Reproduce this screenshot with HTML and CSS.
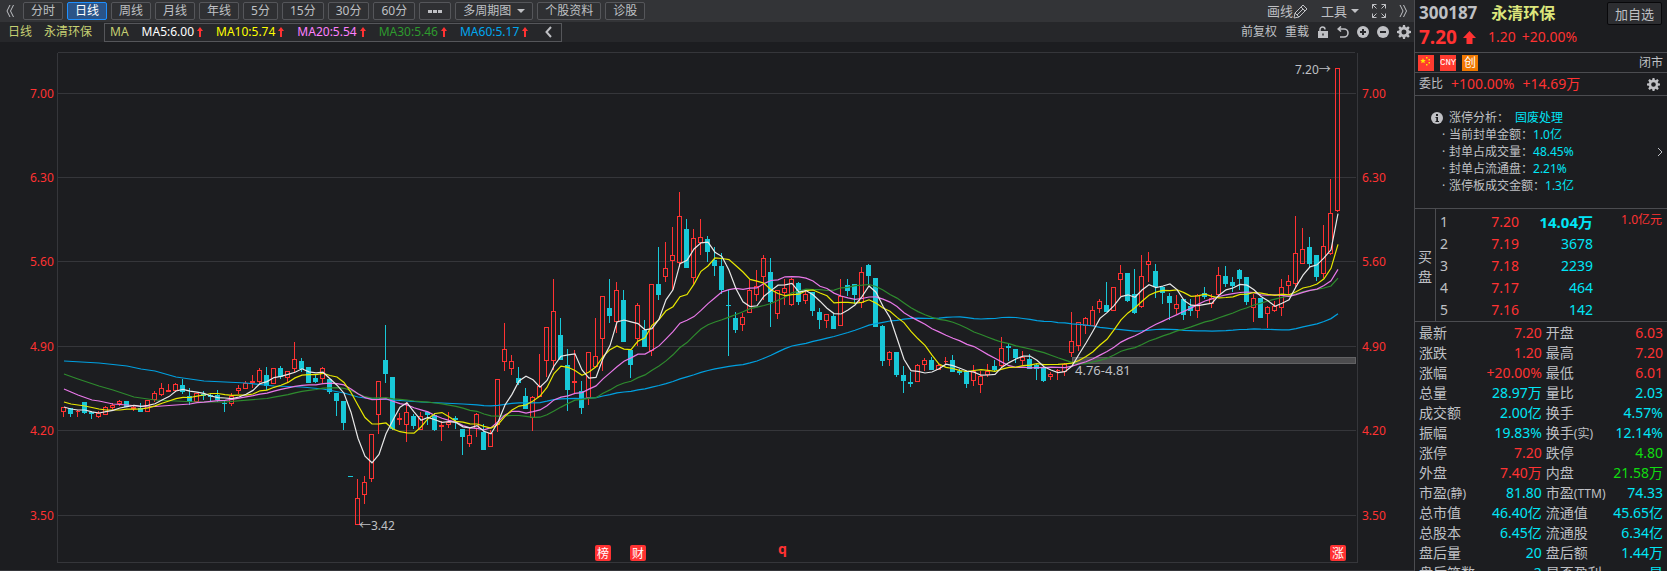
FILE: index.html
```
<!DOCTYPE html>
<html lang="zh-CN">
<head>
	<meta charset="utf-8">
	<meta name="viewport" content="width=device-width, initial-scale=1">
	<title>永清环保 300187</title>
	<link rel="stylesheet" href="styles.css">
</head>
<body>

	<!-- shared icons -->
	<svg class="sprite" aria-hidden="true">
		<symbol id="gear" viewBox="0 0 14 14">
			<path fill-rule="evenodd" d="M6 0h2l.4 2 1 .4 1.700-1.200 1.600 1.600-1.200 1.700.5 1.100 2 .4v2l-2 .4-.5 1.100 1.200 1.700-1.600 1.600-1.700-1.200-1 .4L8 14H6l-.4-2-1-.4-1.700 1.200-1.600-1.600 1.200-1.700L2 8.400 0 8V6l2-.4.5-1.100-1.200-1.700 1.600-1.600 1.700 1.200 1-.4zM7 4.500a2.500 2.500 0 1 0 0 5 2.500 2.500 0 0 0 0-5z" fill="currentColor"/>
		</symbol>
		<symbol id="up" viewBox="0 0 6 10">
			<path d="M3 0l3 4H4v6H2V4H0z" fill="currentColor"/>
		</symbol>
	</svg>

	<main class="main">
		<nav class="toolbar">
			<button class="plain" aria-label="收起">
				<svg width="8" height="14" viewBox="0 0 8 14" fill="none" stroke="currentColor"><path d="M4 1L1 7l3 6M7.500 1l-3 6 3 6"/></svg>
			</button>
			<div class="tabs">
				<button>分时</button>
				<button class="active">日线</button>
				<button>周线</button>
				<button>月线</button>
				<button>年线</button>
				<button>5分</button>
				<button>15分</button>
				<button>30分</button>
				<button>60分</button>
				<button class="more" aria-label="更多周期"><i></i><i></i><i></i></button>
				<button>多周期图<span class="caret"></span></button>
				<button>个股资料</button>
				<button>诊股</button>
			</div>
			<div class="tools">
				<button class="plain">画线
					<svg width="15" height="15" viewBox="0 0 15 15" fill="none" stroke="currentColor"><path d="M1 14l1-5 8-8 4 4-8 8zM2 9l4 4M8 3l4 4M4 11l6-6"/></svg>
				</button>
				<button class="plain">工具<span class="caret"></span></button>
				<button class="plain" aria-label="全屏">
					<svg width="14" height="14" viewBox="0 0 14 14" fill="none" stroke="currentColor"><path d="M.5 4.500v-4h4M.5.5l4 4M9.500.5h4v4M13.500.5l-4 4M.5 9.500v4h4M.5 13.500l4-4M13.500 9.500v4h-4M13.500 13.500l-4-4"/></svg>
				</button>
				<button class="plain" aria-label="展开">
					<svg width="8" height="14" viewBox="0 0 8 14" fill="none" stroke="currentColor"><path d="M1 1l3 6-3 6M4.500 1l3 6-3 6"/></svg>
				</button>
			</div>
		</nav>

		<div class="indicators">
			<span class="name">日线</span>
			<span class="name">永清环保</span>
			<div class="ma-box">
				<span class="ma-title">MA</span>
				<span class="ma5">MA5:6.00<svg class="up"><use href="#up"/></svg></span>
				<span class="ma10">MA10:5.74<svg class="up"><use href="#up"/></svg></span>
				<span class="ma20">MA20:5.54<svg class="up"><use href="#up"/></svg></span>
				<span class="ma30">MA30:5.46<svg class="up"><use href="#up"/></svg></span>
				<span class="ma60">MA60:5.17<svg class="up"><use href="#up"/></svg></span>
				<button class="plain fold" aria-label="折叠">
					<svg width="7" height="12" viewBox="0 0 7 12" fill="none" stroke="currentColor" stroke-width="2"><path d="M6 1L1.500 6 6 11"/></svg>
				</button>
			</div>
			<div class="actions">
				<button class="plain">前复权</button>
				<button class="plain">重载</button>
				<button class="plain" aria-label="锁定">
					<svg width="12" height="12" viewBox="0 0 12 12"><path d="M3 6V3.500a2.500 2.500 0 0 1 5 0" fill="none" stroke="currentColor" stroke-width="1.500"/><path d="M1 5h10v7H1zM5.300 7.500v2h1.400v-2z" fill="currentColor" fill-rule="evenodd"/></svg>
				</button>
				<button class="plain" aria-label="撤销">
					<svg width="12" height="12" viewBox="0 0 12 12" fill="none" stroke="currentColor" stroke-width="1.600"><path d="M4 .5L1.200 3 4 5.500M1.500 3H7a4 4 0 0 1 0 8H3"/></svg>
				</button>
				<button class="plain" aria-label="放大">
					<svg width="12" height="12" viewBox="0 0 12 12"><circle cx="6" cy="6" r="6" fill="currentColor"/><path d="M6 3v6M3 6h6" stroke="#26272a" stroke-width="2"/></svg>
				</button>
				<button class="plain" aria-label="缩小">
					<svg width="12" height="12" viewBox="0 0 12 12"><circle cx="6" cy="6" r="6" fill="currentColor"/><path d="M3 6h6" stroke="#26272a" stroke-width="2"/></svg>
				</button>
				<button class="plain" aria-label="设置"><svg width="14" height="14"><use href="#gear"/></svg></button>
			</div>
		</div>

		<svg class="chart" id="chart" viewBox="0 42 1414 529"></svg>
	</main>

	<aside class="side">
		<header class="quote">
			<div class="quote-text">
				<div class="title"><b class="code">300187</b><b class="stock">永清环保</b></div>
				<div class="price red">
					<b>7.20</b>
					<svg width="13" height="13" viewBox="0 0 13 13"><path d="M6.500 0L13 7H9.500v6h-6V7H0z" fill="currentColor"/></svg>
					<span>1.20</span><span>+20.00%</span>
				</div>
			</div>
			<button class="add">加自选</button>
		</header>

		<div class="tags">
			<svg class="tag" viewBox="0 0 16 16"><path d="M0 0h16v16H0z" fill="#ff3b30"/><path d="M5 3l.8 1.900 2 .1-1.500 1.300.5 2L5 7.200 3.200 8.300l.5-2L2.200 5l2-.1zM8 2h1.500v1.500H8zM10.500 4H12v1.500h-1.500zM10.500 7H12v1.500h-1.500zM8 9h1.500v1.500H8z" fill="#ffe600"/></svg>
			<span class="tag cny">CNY</span>
			<span class="tag chuang">创</span>
			<span class="state">闭市</span>
		</div>

		<div class="ratio">
			<span>委比</span><span class="red num">+100.00%</span><span class="red num">+14.69万</span>
			<button class="plain" aria-label="设置"><svg width="13" height="13"><use href="#gear"/></svg></button>
		</div>

		<section class="analysis">
			<div class="line head">
				<svg width="12" height="12" viewBox="0 0 12 12"><circle cx="6" cy="6" r="6" fill="currentColor"/><path d="M5 2h2v2H5zM4.500 5H7v4h1v1H4.500V9h.8V6h-.8z" fill="#1c1d20"/></svg>
				<span>涨停分析：</span><a href="#">固废处理</a>
			</div>
			<div class="line"><span>当前封单金额：</span><em>1.0亿</em></div>
			<div class="line"><span>封单占成交量：</span><em>48.45%</em></div>
			<div class="line"><span>封单占流通盘：</span><em>2.21%</em></div>
			<div class="line"><span>涨停板成交金额：</span><em>1.3亿</em></div>
			<button class="plain next" aria-label="下一页">
				<svg width="6" height="8" viewBox="0 0 6 8" fill="none" stroke="currentColor"><path d="M1 0l4 4-4 4"/></svg>
			</button>
		</section>

		<section class="bids">
			<div class="bids-title">买<br>盘</div>
			<table>
				<tr><td>1</td><td class="red">7.20</td><td class="cyan"><b>14.04万</b></td><td class="red amount">1.0亿元</td></tr>
				<tr><td>2</td><td class="red">7.19</td><td class="cyan">3678</td><td></td></tr>
				<tr><td>3</td><td class="red">7.18</td><td class="cyan">2239</td><td></td></tr>
				<tr><td>4</td><td class="red">7.17</td><td class="cyan">464</td><td></td></tr>
				<tr><td>5</td><td class="red">7.16</td><td class="cyan">142</td><td></td></tr>
			</table>
		</section>

		<table class="stats">
			<tr><th>最新</th><td class="red">7.20</td><th>开盘</th><td class="red">6.03</td></tr>
			<tr><th>涨跌</th><td class="red">1.20</td><th>最高</th><td class="red">7.20</td></tr>
			<tr><th>涨幅</th><td class="red">+20.00%</td><th>最低</th><td class="red">6.01</td></tr>
			<tr><th>总量</th><td>28.97万</td><th>量比</th><td>2.03</td></tr>
			<tr><th>成交额</th><td>2.00亿</td><th>换手</th><td>4.57%</td></tr>
			<tr><th>振幅</th><td>19.83%</td><th>换手<small>(实)</small></th><td>12.14%</td></tr>
			<tr><th>涨停</th><td class="red">7.20</td><th>跌停</th><td class="green">4.80</td></tr>
			<tr><th>外盘</th><td class="red">7.40万</td><th>内盘</th><td class="green">21.58万</td></tr>
			<tr><th>市盈<small>(静)</small></th><td>81.80</td><th>市盈<small>(TTM)</small></th><td>74.33</td></tr>
			<tr><th>总市值</th><td>46.40亿</td><th>流通值</th><td>45.65亿</td></tr>
			<tr><th>总股本</th><td>6.45亿</td><th>流通股</th><td>6.34亿</td></tr>
			<tr><th>盘后量</th><td>20</td><th>盘后额</th><td>1.44万</td></tr>
			<tr><th>盘后笔数</th><td>2</td><th>是否盈利</th><td>是</td></tr>
		</table>
	</aside>

	<script src="chart.js"></script>
</body>
</html>
```
FILE: styles.css
```
*{
    margin: 0;
    padding: 0;
    box-sizing: border-box;
}
body{
    display: flex;
    height: 100vh;
    overflow: hidden;
    background: #1c1d20;
    color: #bfc0c4;
    font: 12px/16px "Noto Sans", "Noto Sans CJK SC", sans-serif;
}
button{
    font: inherit;
    color: inherit;
    cursor: pointer;
}
svg{
    display: block;
    flex: none;
}
.sprite{
    position: absolute;
    width: 0;
    height: 0;
}
.plain{
    display: flex;
    align-items: center;
    background: none;
    border: none;
}
.red{ color: #ff3232; }
.cyan{ color: #00e6f6; }
.green{ color: #10dc10; }

/* left part */
.main{
    flex: 1;
    min-width: 0;
}
.toolbar{
    display: flex;
    align-items: center;
    height: 22px;
    padding: 0 7px 0 6px;
    background: #333437;
}
.tabs{
    display: flex;
    gap: 4px;
    margin-left: 9px;
}
.tabs button{
    display: flex;
    align-items: center;
    height: 18px;
    padding: 0 7px;
    white-space: nowrap;
    background: #2f3033;
    border: 1px solid #55565a;
    border-radius: 2px;
}
.tabs .active{
    color: #fff;
    background: #2a5488;
    border-color: #1e90ff;
}
.tabs .more{
    gap: 1px;
    padding: 0 8px;
}
.more i{
    width: 4px;
    height: 3px;
    background: #bfc0c4;
}
.caret{
    margin-left: 6px;
    border: 4px solid transparent;
    border-top-color: #bfc0c4;
    border-bottom: none;
}
.tools{
    display: flex;
    align-items: center;
    gap: 13px;
    margin-left: auto;
    font-size: 13px;
}
.tools .caret{
    margin-left: 4px;
}

.indicators{
    display: flex;
    align-items: center;
    height: 20px;
    padding: 0 3px 0 8px;
    background: #26272a;
}
.name{
    margin-right: 12px;
    color: #c5cf72;
}
.ma-box{
    display: flex;
    align-items: center;
    gap: 13px;
    height: 19px;
    padding: 0 9px 0 5px;
    border: 1px solid #55565a;
}
.ma-box span{
    display: flex;
    align-items: center;
}
.ma-title{ color: #c5cf72; }
.ma5{ color: #fff; }
.ma10{ color: #ffff00; }
.ma20{ color: #ff80ff; }
.ma30{ color: #2e9a2e; }
.ma60{ color: #00a8f0; }
.up{
    width: 6px;
    height: 10px;
    margin-left: 3px;
    color: #ff3232;
}
.fold{
    margin-left: 4px;
}
.actions{
    display: flex;
    align-items: center;
    gap: 8px;
    margin-left: auto;
}

.chart{
    width: 100%;
    height: auto;
}
.chart text{
    fill: #bfc0c4;
    font-size: 12px;
}
.chart .note{
    font-size: 13px;
}
.chart .tick{
    fill: #ff3232;
}
.chart .badge{
    fill: #fff;
    text-anchor: middle;
}
.chart .mark{
    fill: #ff3232;
    font-size: 14px;
    font-weight: bold;
}

/* right part */
.side{
    width: 253px;
    flex: none;
    border-left: 1px solid #4b4c50;
}
.quote{
    display: flex;
    justify-content: space-between;
    align-items: flex-start;
    height: 53px;
    padding: 2px 5px 0 4px;
    border-bottom: 1px solid #4b4c50;
}
.title{
    display: flex;
    gap: 14px;
    line-height: 22px;
}
.code{
    font-size: 17px;
}
.stock{
    font-size: 16px;
    color: #dce67c;
}
.price{
    display: flex;
    align-items: center;
    gap: 6px;
    font-size: 14px;
    line-height: 26px;
}
.price b{
    font-size: 19px;
}
.price svg{
    margin-right: 6px;
}
.add{
    height: 23px;
    padding: 0 7px;
    font-size: 13px;
    background: #2d2e31;
    border: 1px solid #08080a;
    border-radius: 2px;
}
.tags{
    display: flex;
    align-items: center;
    gap: 6px;
    height: 20px;
    padding: 0 4px 0 3px;
    border-bottom: 1px solid #4b4c50;
}
.tag{
    width: 16px;
    height: 16px;
    color: #fff;
    text-align: center;
}
.cny{
    font: 9px/16px "Liberation Mono", monospace;
    background: #ff3b30;
}
.chuang{
    background: #f07800;
}
.state{
    margin-left: auto;
}
.ratio{
    display: flex;
    align-items: center;
    gap: 8px;
    height: 23px;
    padding: 0 7px 0 4px;
    border-bottom: 1px solid #4b4c50;
}
.num{
    font-size: 14px;
}
.ratio button{
    margin-left: auto;
}

.analysis{
    position: relative;
    height: 113px;
    padding: 13px 16px;
    border-bottom: 1px solid #4b4c50;
}
.line{
    display: flex;
    align-items: center;
    height: 17px;
    padding-left: 18px;
}
.line::before{
    content: "·";
    width: 7px;
    margin-left: -7px;
}
.line em{
    font-style: normal;
    color: #00e6f6;
}
.line a{
    color: #00e6f6;
    text-decoration: none;
}
.head{
    gap: 6px;
    padding-left: 0;
}
.head::before{
    display: none;
}
.next{
    position: absolute;
    right: 4px;
    top: 52px;
}

.bids{
    display: flex;
    border-bottom: 1px solid #4b4c50;
    font-size: 14px;
}
.bids-title{
    display: flex;
    align-items: center;
    width: 21px;
    padding: 4px 0 0 3px;
    line-height: 20px;
    border-right: 1px solid #4b4c50;
}
.bids table{
    flex: 1;
    margin: 1px 5px 1px 0;
    border-collapse: collapse;
}
.bids td{
    height: 22px;
    padding: 2px 0 0;
    text-align: right;
}
.bids td:first-child{
    width: 18px;
    padding-left: 4px;
    text-align: left;
}
.bids td:nth-child(2){
    width: 65px;
}
.bids td:nth-child(3){
    width: 74px;
}
.bids b{
    font-size: 15px;
}
.bids .amount{
    padding: 0 0 2px;
    font-size: 12px;
}

.stats{
    width: 100%;
    margin-top: 1px;
    border-collapse: collapse;
    font-size: 14px;
}
.stats th,
.stats td{
    height: 20px;
    white-space: nowrap;
}
.stats th{
    width: 70px;
    padding-left: 4px;
    font-weight: normal;
    text-align: left;
}
.stats td{
    color: #00e6f6;
    text-align: right;
}
.stats td:last-child{
    padding-right: 4px;
}
.stats .red{ color: #ff3232; }
.stats .green{ color: #10dc10; }
.stats small{
    font-size: 12px;
}
```
FILE: chart.js
```
// one candle per entry: direction (r = up, g = down), then the y of high, body top, body bottom, low
const candles = `
r 407 407 412 417,g 408 408 414 417,r 410 411 412 417,g 402 402 413 414,g 411 412 414 419,
r 411 413 417 418,r 406 407 415 415,r 403 405 408 410,r 400 401 404 406,g 401 401 407 407,
r 406 407 409 411,g 403 408 412 412,r 400 400 412 412,r 391 393 400 402,r 383 388 395 396,
r 384 390 392 392,r 383 384 391 391,g 379 385 392 394,g 388 396 402 405,r 393 393 402 402,
g 391 394 396 400,g 393 395 397 402,g 390 395 400 402,g 401 403 404 412,r 393 396 404 406,
r 385 388 391 394,r 381 383 389 389,r 375 381 383 388,r 368 370 382 383,g 367 375 386 390,
r 368 368 384 384,g 366 368 377 379,r 371 371 378 383,r 342 359 369 372,g 358 361 369 372,
g 367 367 383 383,g 375 378 382 383,r 367 368 379 383,g 379 379 392 394,g 393 393 401 416,
g 401 401 423 430,g 476 476 477 477,r 479 498 525 525,r 476 482 495 504,r 434 434 479 482,
r 381 381 415 434,g 325 360 374 383,g 377 377 429 430,r 413 418 420 425,r 402 412 425 442,
g 414 416 426 429,r 412 416 430 430,g 411 412 415 425,g 413 415 430 431,r 421 425 427 441,
r 412 422 425 428,g 416 418 420 429,g 429 429 437 455,r 427 435 444 447,r 413 414 429 437,
g 424 432 450 450,r 430 433 447 447,r 379 379 425 432,r 323 349 362 371,r 355 361 369 375,
g 367 378 383 385,g 388 396 409 409,r 396 397 418 431,r 354 386 397 397,r 327 327 361 377,
r 279 311 361 370,g 318 335 360 360,g 349 365 390 411,r 350 381 383 393,g 381 391 408 414,
r 352 352 398 405,r 318 356 367 368,r 296 296 339 371,g 279 308 316 323,r 282 290 322 333,
g 290 300 342 342,g 350 350 365 378,r 303 305 339 346,g 320 330 347 347,r 284 284 351 356,
g 247 284 295 300,r 242 268 277 282,r 227 255 261 290,r 192 216 263 267,g 219 229 268 268,
r 229 238 278 284,r 219 237 243 255,g 236 239 252 262,g 247 260 266 276,g 253 266 290 294,
g 290 305 306 356,g 312 318 330 333,r 313 317 325 331,r 280 290 313 313,r 270 286 295 301,
r 255 258 277 300,g 258 272 302 327,r 290 290 314 319,r 279 288 293 305,r 278 279 305 306,
g 282 283 302 305,r 290 294 301 304,g 292 292 311 316,g 308 312 320 329,r 314 314 321 328,
g 314 316 329 329,r 279 296 326 326,g 279 285 291 296,g 284 284 295 304,r 267 272 303 308,
g 264 265 276 285,g 278 278 327 327,g 325 326 361 366,r 351 352 360 366,g 352 352 375 377,
g 366 375 381 393,g 372 382 384 387,r 364 365 382 382,r 358 360 365 371,g 357 360 370 370,
r 364 365 370 370,r 357 361 362 364,g 355 360 372 372,g 369 371 373 375,g 371 371 384 388,
r 365 371 381 386,r 371 376 385 393,r 364 371 375 377,g 360 366 370 372,r 337 348 366 368,
g 344 346 348 361,g 349 349 358 363,r 351 357 361 365,g 354 359 369 369,g 364 365 369 380,
g 367 367 381 382,r 372 374 377 380,r 369 370 371 380,r 363 364 372 376,r 312 341 353 357,
r 322 322 346 351,r 317 318 326 334,r 306 310 326 326,r 299 301 309 313,g 282 305 312 312,
r 287 287 311 311,r 265 273 280 296,g 273 273 301 302,g 269 294 313 314,r 255 276 307 308,
r 252 261 265 282,g 264 271 287 298,g 286 287 293 304,g 293 296 303 320,r 295 304 309 314,
g 299 299 315 320,g 299 306 311 316,r 294 295 311 318,g 287 293 297 299,r 294 298 304 308,
r 267 275 295 295,g 266 276 284 287,g 277 282 286 292,g 269 270 279 290,g 277 277 302 305,
r 294 298 308 322,g 298 298 318 318,r 306 307 314 328,r 301 306 311 312,r 279 287 308 316,
r 275 281 286 295,r 216 253 284 287,r 228 249 264 264,g 237 247 264 267,g 255 255 277 281,
r 225 246 274 278,r 179 213 254 255,r 68 68 211 212`.trim().split(",").map(s => {
	const [dir, ...y] = s.trim().split(" ");
	return { up: dir == "r", high: +y[0], top: +y[1], bottom: +y[2], low: +y[3] };
});

// moving averages; "lead" holds [index, y] points for the days before there are n closes
const averages = [
	{ n: 60, color: "#00a0e0", lead: [[0,361],[5,363],[9,366],[11,369],[13,371],[16,377],[20,381],[23,382],[26,383],[30,386],[34,387],[37,389],[40,393],[42,397],[43,398],[47,400],[51,402],[57,404]] },
	{ n: 30, color: "#2e8b2e", lead: [[0,374],[2,379],[5,386],[7,390],[10,397],[13,400],[16,401],[19,402],[23,402],[28,399]] },
	{ n: 20, color: "#e878e8", lead: [[0,389],[1,392],[2,395],[4,400],[5,401],[7,404],[9,405],[12,407],[16,405],[18,404]] },
	{ n: 10, color: "#e8e800", lead: [[0,402],[1,404],[3,406],[5,409],[6,410],[8,410]] },
	{ n: 5, color: "#e8e8e8", lead: [[0,407],[1,409],[2,410],[3,410]] }
];

const STEP = 7;
const FIRST = 63;
let out = "";

// frame and grid
let grid = "M57.5 52.5H1355M57.5 52.5V562.5H1357.5V52.5M0 570.5H1414";
const ticks = [["7.00", 93], ["6.30", 177], ["5.60", 261], ["4.90", 346], ["4.20", 430], ["3.50", 515]];
for (const [label, y] of ticks) {
	grid += `M57.5 ${y + 0.5}H1356`;
	out += `<text class="tick" x="30" y="${y + 5}">${label}</text>`;
	out += `<text class="tick" x="1362" y="${y + 5}">${label}</text>`;
}
out += `<path d="${grid}" fill="none" stroke="#35363a" shape-rendering="crispEdges"/>`;

// price gap
out += `<rect x="1072.5" y="357.5" width="283" height="6" fill="#4c4c4e" stroke="#626264"/>`;

// candles
let upLines = "", downLines = "", downBodies = "";
candles.forEach((c, i) => {
	const x = FIRST + i * STEP;
	const wick = `M${x + 0.5} ${c.high}V${c.top}M${x + 0.5} ${c.bottom}V${c.low}`;
	if (c.up) {
		upLines += wick;
		upLines += `M${x - 1.5} ${c.top + 0.5}h4v${c.bottom - c.top - 1}h-4z`;
	} else {
		downLines += wick;
		downBodies += `M${x - 2} ${c.top}h5V${c.bottom}h-5z`;
	}
});
out += `<g shape-rendering="crispEdges"><path d="${upLines}" fill="none" stroke="#ff3232"/>`;
out += `<path d="${downLines}" stroke="#18c8d8"/><path d="${downBodies}" fill="#18c8d8"/></g>`;

// average lines
for (const { n, color, lead } of averages) {
	const points = lead.slice();
	for (let i = n - 1; i < candles.length; i++) {
		let sum = 0;
		for (let k = i - n + 1; k <= i; k++) {
			sum += candles[k].up ? candles[k].top : candles[k].bottom;
		}
		points.push([i, sum / n]);
	}
	const line = points.map(([i, y]) => (FIRST + 1 + i * STEP) + "," + y.toFixed(1)).join(" ");
	out += `<polyline points="${line}" fill="none" stroke="${color}" stroke-width="1.2"/>`;
}

// notes
out += `<text x="1295" y="74">7.20→</text>`;
out += `<text x="359" y="530">←3.42</text>`;
out += `<text class="note" x="1075" y="375">4.76-4.81</text>`;
for (const [char, x] of [["榜", 595], ["财", 630], ["涨", 1330]]) {
	out += `<rect x="${x}" y="545" width="16" height="16" rx="2" fill="#ff3232"/>`;
	out += `<text class="badge" x="${x + 8}" y="558">${char}</text>`;
}
out += `<text class="mark" x="778" y="554">q</text>`;

document.getElementById("chart").innerHTML = out;
```
